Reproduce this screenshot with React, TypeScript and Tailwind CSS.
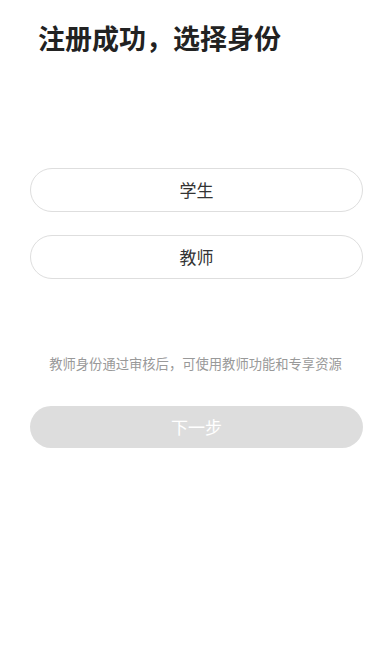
import { useState } from "react"

const FONT = { fontFamily: '"Noto Sans CJK SC", "Noto Sans", sans-serif' }

export default function App() {
  const [role, setRole] = useState<"student" | "teacher" | null>(null)

  return (
    <div className="min-h-[664px] w-full bg-white" style={FONT}>
      {/* Title */}
      <h1 className="pl-[38px] pt-[19px] text-[27px] font-bold leading-[38px] text-[#222]">
        注册成功，选择身份
      </h1>

      {/* Role options */}
      <div className="mt-[111px] flex flex-col gap-[23px] pl-[30px] pr-[28px]">
        <button
          onClick={() => setRole("student")}
          className={`h-[44px] w-full rounded-full border bg-white text-[17px] text-[#333] ${
            role === "student" ? "border-[#333]" : "border-[#dedede]"
          }`}
        >
          学生
        </button>
        <button
          onClick={() => setRole("teacher")}
          className={`h-[44px] w-full rounded-full border bg-white text-[17px] text-[#333] ${
            role === "teacher" ? "border-[#333]" : "border-[#dedede]"
          }`}
        >
          教师
        </button>
      </div>

      <p className="mt-[75px] text-center text-[13.3px] leading-[20px] text-[#999]">
        教师身份通过审核后，可使用教师功能和专享资源
      </p>

      <div className="mt-[32px] pl-[30px] pr-[28px]">
        <button
          disabled={!role}
          className={`h-[42px] w-full rounded-full text-[17px] text-white ${
            role ? "bg-[#222]" : "bg-[#dddddd]"
          }`}
        >
          下一步
        </button>
      </div>
    </div>
  )
}
